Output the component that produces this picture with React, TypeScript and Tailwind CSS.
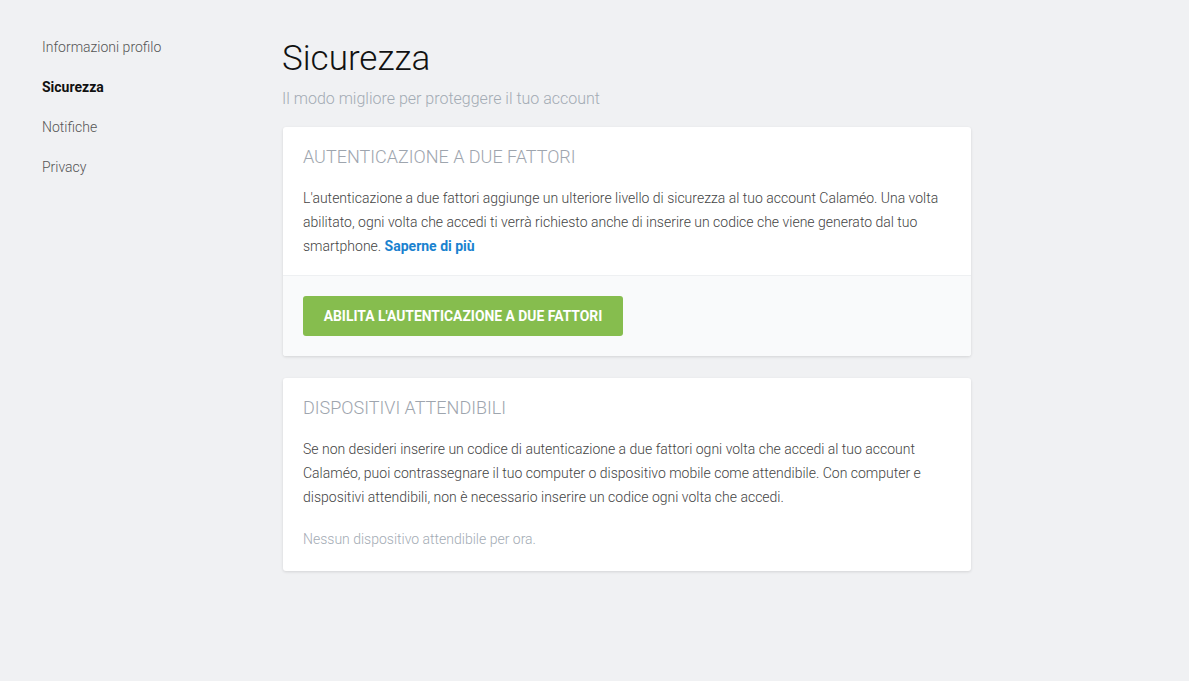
const menu = ["Informazioni profilo", "Sicurezza", "Notifiche", "Privacy"];

const Card = (props: { title: string; children: React.ReactNode; footer?: React.ReactNode }) => {
  return (
    <section className="bg-white rounded-[3px] shadow-[0_1px_3px_rgba(0,0,0,0.12)] overflow-hidden">
      <div className="px-5 pt-[18px] pb-[17px]">
        <h2 className="text-[18px] leading-6 font-light text-[#9ea5ae] uppercase">{props.title}</h2>
        {props.children}
      </div>
      {props.footer}
    </section>
  );
};

export default function App() {
  const active = "Sicurezza";

  return (
    <div className="min-h-screen bg-[#f0f1f3] font-['Roboto',sans-serif] flex pl-[42px] pt-[27px]">
      <nav className="w-[240px] shrink-0 flex flex-col">
        {menu.map((item) => (
          <a
            key={item}
            className={
              item === active
                ? "h-10 leading-10 text-[14px] font-bold text-[#111]"
                : "h-10 leading-10 text-[14px] font-light text-[#555]"
            }
          >
            {item}
          </a>
        ))}
      </nav>

      <main className="w-[690px] pt-2">
        <h1 className="text-[35px] leading-[48px] font-light text-[#111]">Sicurezza</h1>
        <p className="mt-1 text-[16px] leading-6 font-light text-[#a3abb4]">
          Il modo migliore per proteggere il tuo account
        </p>

        <div className="mt-4 ml-px flex flex-col gap-[22px] w-[688px]">
          <Card
            title="Autenticazione a due fattori"
            footer={
              <div className="border-t border-[#eef0f2] bg-[#f9fafb] p-5">
                <button className="h-10 w-[320px] rounded-[3px] bg-[#86bd4e] text-white text-[13.9px] font-bold uppercase">
                  Abilita l'autenticazione a due fattori
                </button>
              </div>
            }
          >
            <p className="mt-[17px] text-[14px] leading-6 font-light text-[#444]">
              L'autenticazione a due fattori aggiunge un ulteriore livello di sicurezza al tuo account Calaméo. Una volta
              abilitato, ogni volta che accedi ti verrà richiesto anche di inserire un codice che viene generato dal tuo
              smartphone. <a className="font-bold text-[#1a82cf]">Saperne di più</a>
            </p>
          </Card>

          <Card title="Dispositivi attendibili">
            <p className="mt-[17px] text-[14px] leading-6 font-light text-[#444]">
              Se non desideri inserire un codice di autenticazione a due fattori ogni volta che accedi al tuo account
              Calaméo, puoi contrassegnare il tuo computer o dispositivo mobile come attendibile. Con computer e
              dispositivi attendibili, non è necessario inserire un codice ogni volta che accedi.
            </p>
            <p className="mt-[18px] mb-[3px] text-[14px] leading-6 font-light text-[#a3abb4]">
              Nessun dispositivo attendibile per ora.
            </p>
          </Card>
        </div>
      </main>
    </div>
  );
}
